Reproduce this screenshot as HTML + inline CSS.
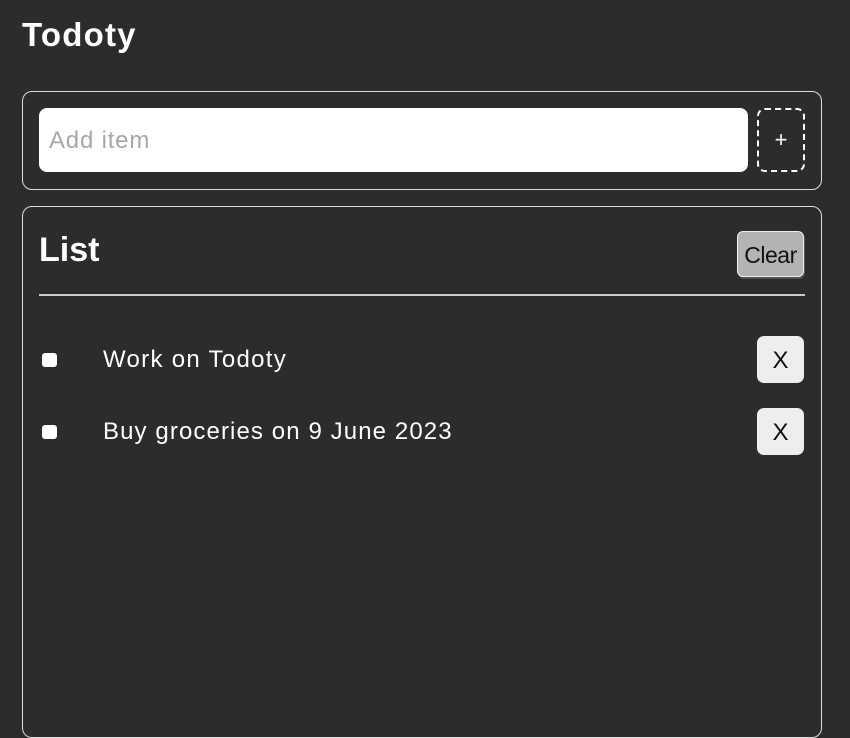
<!DOCTYPE html>
<html><head><style>
body{margin:0;width:850px;height:724px;background:#2c2c2c;font-family:"Liberation Sans",sans-serif;color:#fff;overflow:hidden;position:relative}
.a{position:absolute}
</style></head><body>
<div class="a" style="left:22px;top:16px;font-size:33px;font-weight:bold;letter-spacing:1.2px">Todoty</div>
<div class="a" style="left:22px;top:91px;width:798px;height:97px;border:1px solid #ddd;border-radius:10px"></div>
<div class="a" style="left:39px;top:108px;width:709px;height:64px;background:#fff;border-radius:8px"></div>
<div class="a" style="left:49px;top:127px;font-size:24px;color:#a8a8a8;letter-spacing:0.8px">Add item</div>
<div class="a" style="left:757px;top:108px;width:44px;height:60px;border:2px dashed #fff;border-radius:8px;text-align:center;line-height:60px;font-size:22px">+</div>
<div class="a" style="left:22px;top:206px;width:798px;height:530px;border:1px solid #ddd;border-radius:10px"></div>
<div class="a" style="left:39px;top:231px;font-size:34px;font-weight:bold">List</div>
<div class="a" style="left:737px;top:231px;width:65px;height:44px;background:#b3b3b3;border:1px solid #eee;border-radius:6px;box-shadow:1px 2px 0 #555;color:#111;font-size:23px;text-align:center;line-height:46px;letter-spacing:-0.5px">Clear</div>
<div class="a" style="left:39px;top:294px;width:766px;height:2px;background:#ccc"></div>
<div class="a" style="left:42px;top:353px;width:15px;height:14px;background:#fff;border-radius:3px"></div>
<div class="a" style="left:103px;top:346px;font-size:24px;letter-spacing:1.3px">Work on Todoty</div>
<div class="a" style="left:757px;top:336px;width:47px;height:47px;background:#eee;border-radius:7px;color:#111;font-size:24px;text-align:center;line-height:49px">X</div>
<div class="a" style="left:42px;top:425px;width:15px;height:14px;background:#fff;border-radius:3px"></div>
<div class="a" style="left:103px;top:418px;font-size:24px;letter-spacing:1.1px">Buy groceries on 9 June 2023</div>
<div class="a" style="left:757px;top:408px;width:47px;height:47px;background:#eee;border-radius:7px;color:#111;font-size:24px;text-align:center;line-height:49px">X</div>
</body></html>
